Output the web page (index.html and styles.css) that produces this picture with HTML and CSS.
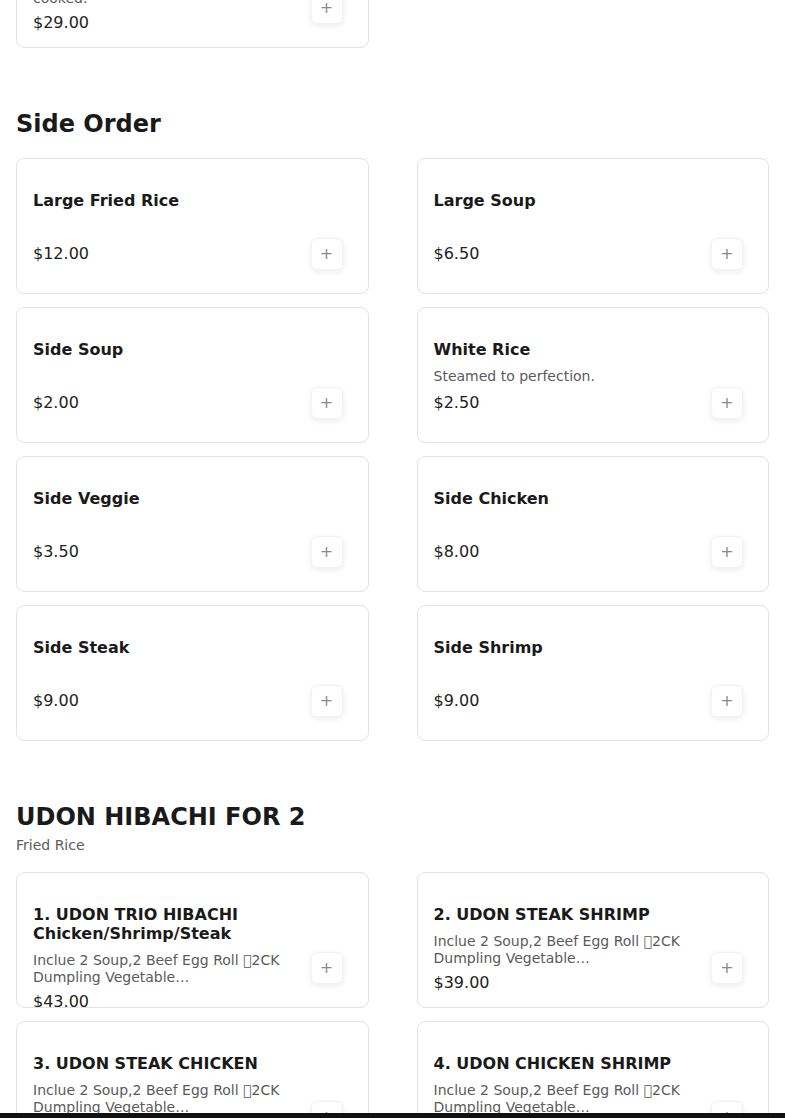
FILE: index.html
```html
<!DOCTYPE html>
<html lang="en">
<head>
<meta charset="utf-8">
<title>Menu</title>
<link rel="stylesheet" href="styles.css">
</head>
<body>
<main class="menu">
  <section class="section section-prev">
    <div class="grid">
      <div class="card">
        <div class="info">
          <div class="name">Hibachi Filet Mignon</div>
          <div class="desc">Served with vegetables, steak well cooked.</div>
          <div class="price">$29.00</div>
        </div>
        <button class="add" aria-label="Add">+</button>
      </div>
    </div>
  </section>

  <section class="section">
    <div class="head">
      <h2 class="title">Side Order</h2>
    </div>
    <div class="grid">
      <div class="card"><div class="info"><div class="name">Large Fried Rice</div><div class="desc"></div><div class="price">$12.00</div></div><button class="add" aria-label="Add">+</button></div>
      <div class="card"><div class="info"><div class="name">Large Soup</div><div class="desc"></div><div class="price">$6.50</div></div><button class="add" aria-label="Add">+</button></div>
      <div class="card"><div class="info"><div class="name">Side Soup</div><div class="desc"></div><div class="price">$2.00</div></div><button class="add" aria-label="Add">+</button></div>
      <div class="card"><div class="info"><div class="name">White Rice</div><div class="desc">Steamed to perfection.</div><div class="price">$2.50</div></div><button class="add" aria-label="Add">+</button></div>
      <div class="card"><div class="info"><div class="name">Side Veggie</div><div class="desc"></div><div class="price">$3.50</div></div><button class="add" aria-label="Add">+</button></div>
      <div class="card"><div class="info"><div class="name">Side Chicken</div><div class="desc"></div><div class="price">$8.00</div></div><button class="add" aria-label="Add">+</button></div>
      <div class="card"><div class="info"><div class="name">Side Steak</div><div class="desc"></div><div class="price">$9.00</div></div><button class="add" aria-label="Add">+</button></div>
      <div class="card"><div class="info"><div class="name">Side Shrimp</div><div class="desc"></div><div class="price">$9.00</div></div><button class="add" aria-label="Add">+</button></div>
    </div>
  </section>

  <section class="section">
    <div class="head">
      <h2 class="title">UDON HIBACHI FOR 2</h2>
      <p class="subtitle">Fried Rice</p>
    </div>
    <div class="grid">
      <div class="card"><div class="info"><div class="name">1. UDON TRIO HIBACHI Chicken/Shrimp/Steak</div><div class="desc">Inclue 2 Soup,2 Beef Egg Roll &#xE000;2CK Dumpling Vegetable Udon,Salad,FriedRice,Sauce</div><div class="price">$43.00</div></div><button class="add" aria-label="Add">+</button></div>
      <div class="card"><div class="info"><div class="name">2. UDON STEAK SHRIMP</div><div class="desc">Inclue 2 Soup,2 Beef Egg Roll &#xE000;2CK Dumpling Vegetable Udon,Salad,FriedRice,Sauce</div><div class="price">$39.00</div></div><button class="add" aria-label="Add">+</button></div>
      <div class="card"><div class="info"><div class="name">3. UDON STEAK CHICKEN</div><div class="desc">Inclue 2 Soup,2 Beef Egg Roll &#xE000;2CK Dumpling Vegetable Udon,Salad,FriedRice,Sauce</div><div class="price">$37.00</div></div><button class="add" aria-label="Add">+</button></div>
      <div class="card"><div class="info"><div class="name">4. UDON CHICKEN SHRIMP</div><div class="desc">Inclue 2 Soup,2 Beef Egg Roll &#xE000;2CK Dumpling Vegetable Udon,Salad,FriedRice,Sauce</div><div class="price">$37.00</div></div><button class="add" aria-label="Add">+</button></div>
    </div>
  </section>
</main>
<div class="cart-bar"></div>
</body>
</html>
```

FILE: styles.css
```css
* { box-sizing: border-box; }
html, body { margin: 0; padding: 0; background: #fff; }
body {
  font-family: "DejaVu Sans", sans-serif;
  color: #1a1a1a;
  overflow: hidden;
}
.menu {
  padding: 0 16px;
}
.section-prev {
  margin-top: -88px;
}
.section + .section {
  margin-top: 56px;
}
.head {
  padding-bottom: 14px;
}
.title {
  margin: 0;
  font-size: 24px;
  line-height: 40px;
  font-weight: 700;
  color: #1a1a1a;
}
.subtitle {
  margin: -2px 0 3px;
  font-size: 14px;
  line-height: 20px;
  color: #5c5c5c;
}
.grid {
  display: grid;
  grid-template-columns: 1fr 1fr;
  column-gap: 48px;
  row-gap: 13px;
}
.card {
  height: 136px;
  overflow: hidden;
  border: 1px solid #e3e3e3;
  border-radius: 8px;
  background: #fff;
  padding: 32px 25px 0 16px;
  display: flex;
  align-items: flex-start;
  gap: 16px;
}
.info {
  flex: 1;
  min-width: 0;
}
.name {
  font-size: 16px;
  line-height: 1.2;
  font-weight: 700;
  color: #1a1a1a;
}
.desc {
  margin-top: 9px;
  min-height: 19px;
  font-size: 14px;
  line-height: 17px;
  color: #5a5a5a;
  display: -webkit-box;
  -webkit-line-clamp: 2;
  -webkit-box-orient: vertical;
  overflow: hidden;
}
.price {
  margin-top: 6px;
  font-size: 16px;
  line-height: 1.2;
  color: #222;
}
.add {
  flex: none;
  margin-top: 47px;
  width: 32px;
  height: 32px;
  padding: 0;
  border: 1px solid #f2f2f2;
  border-radius: 6px;
  background: #fff;
  box-shadow: 0 2px 6px rgba(0, 0, 0, 0.08);
  color: #8a8a8a;
  font-family: "DejaVu Sans", sans-serif;
  font-size: 16px;
  line-height: 30px;
  text-align: center;
}
.cart-bar {
  position: fixed;
  left: 0;
  right: 0;
  bottom: 0;
  height: 5px;
  background: #111;
}
```
